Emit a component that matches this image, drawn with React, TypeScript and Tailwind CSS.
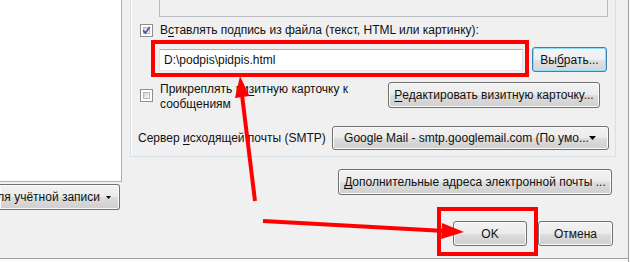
import type { ReactNode } from "react"

const btnBase =
  "flex items-center justify-center whitespace-nowrap rounded-[3px] border border-[#707070] bg-[linear-gradient(to_bottom,#f2f2f2_0%,#ebebeb_50%,#dddddd_51%,#cfcfcf_100%)] shadow-[inset_0_0_0_1px_#fbfbfb]"

const Button = ({ children, className }: { children: ReactNode; className: string }) => (
  <div className={`${btnBase} ${className}`}>{children}</div>
)

const Key = ({ children }: { children: ReactNode }) => (
  <span className="underline decoration-1 underline-offset-[2px]">{children}</span>
)

const Checkbox = ({ checked }: { checked?: boolean }) => (
  <div className="relative h-[13px] w-[13px] shrink-0 border border-[#8e8f8f] bg-white p-[2px]">
    <div className="h-full w-full border border-[#b4b9bf] bg-[linear-gradient(135deg,#d6d6d6,#f7f7f7)]" />
    {checked && (
      <svg className="absolute left-0 top-0" width="11" height="11" viewBox="0 0 11 11">
        <path d="M2.2 5.4 L4.4 8 L8.8 2" fill="none" stroke="#4a5f97" strokeWidth="1.8" />
      </svg>
    )}
  </div>
)

const App = () => {
  return (
    <div className="relative flex h-[262px] w-[630px] overflow-hidden bg-[#f0f0f0] font-['Liberation_Sans',Arial,sans-serif] text-[12px] text-[#111]">
      <div className="flex w-[628px] flex-col">
        <div className="flex h-[258px]">
          {/* left column: account list + actions */}
          <div className="flex w-[122px] shrink-0 flex-col">
            <div className="h-[182px] w-[122px] border-b border-r border-[#abadb3] bg-white" />
            <div
              className={`${btnBase} mt-[2px] h-[26px] w-[120px] justify-end overflow-hidden rounded-l-none border-l-0 pr-[8px]`}
            >
              <span>Действия для учётной записи</span>
              <svg className="ml-[6px] shrink-0" width="5" height="3" viewBox="0 0 5 3">
                <path d="M0 0 H5 L2.5 3 Z" fill="#000" />
              </svg>
            </div>
          </div>

          {/* right column */}
          <div className="ml-[8px] flex w-[486px] flex-col">
            <div className="flex h-[157px] w-[486px] flex-col border border-t-0 border-[#d5dfe5] shadow-[inset_1px_0_0_#fff]">
              <div className="ml-[28px] h-[17px] w-[449px] border border-t-0 border-[#b9bcc2]" />

              <div className="mt-[7px] flex h-[13px] items-center">
                <div className="ml-[9px]">
                  <Checkbox checked />
                </div>
                <span className="ml-[7px] leading-[15px]">
                  В<Key>с</Key>тавлять подпись из файла (текст, HTML или картинку):
                </span>
              </div>

              <div className="mt-[10px] flex h-[25px] items-center">
                <div className="ml-[28px] flex h-[22px] w-[364px] items-center border border-[#abadb3] border-b-[#e3e9ef] border-l-[#e2e3ea] border-r-[#dbdfe6] bg-white pl-[4px]">
                  D:\podpis\pidpis.html
                </div>
                <div className="ml-[9px] flex h-[25px] w-[75px] items-center justify-center whitespace-nowrap rounded-[3px] border border-[#3c7fb1] bg-[linear-gradient(to_bottom,#f4f6f8_0%,#eceef0_50%,#dfe2e4_51%,#d3d6d9_100%)] shadow-[inset_0_0_0_1px_#8fdcf8]">
                  Вы<Key>б</Key>рать...
                </div>
              </div>

              <div className="mt-[10px] flex">
                <div className="ml-[9px] mt-[7px]">
                  <Checkbox />
                </div>
                <div className="ml-[7px] w-[226px] leading-[15px]">
                  Прикреплять ви<Key>з</Key>итную карточку к сообщениям
                </div>
                <Button className="ml-[2px] h-[26px] w-[212px]">
                  <Key>Р</Key>едактировать визитную карточку...
                </Button>
              </div>

              <div className="mt-[14px] flex h-[24px] items-center">
                <span className="ml-[7px] leading-[15px]">
                  Сервер <Key>и</Key>сходящей почты (SMTP)
                </span>
                <div className={`${btnBase} ml-auto mr-[6px] h-[24px] w-[277px] justify-between pl-[5px] pr-[6px]`}>
                  <span>Google Mail - smtp.googlemail.com (По умо...</span>
                  <svg width="7" height="4" viewBox="0 0 7 4">
                    <path d="M0 0 H7 L3.5 4 Z" fill="#000" />
                  </svg>
                </div>
              </div>
            </div>

            <Button className="ml-[208px] mt-[12px] h-[26px] w-[274px]">
              <Key>Д</Key>ополнительные адреса электронной почты ...
            </Button>

            <div className="mt-[26px] flex">
              <Button className="ml-[323px] h-[25px] w-[74px]">OK</Button>
              <Button className="ml-[11px] h-[25px] w-[75px]">Отмена</Button>
            </div>
          </div>
        </div>
        <div className="h-px w-full bg-[#a0a0a0]" />
        <div className="h-[3px] w-full bg-[#fbfbfb]" />
      </div>
      <div className="h-full w-px bg-[#a0a0a0]" />
      <div className="h-full w-px bg-[#fbfbfb]" />

      {/* red annotations drawn over the dialog */}
      <div className="pointer-events-none absolute left-[151px] top-[40px] h-[37px] w-[378px] border-4 border-[#ff0000]" />
      <div className="pointer-events-none absolute left-[437px] top-[207px] h-[49px] w-[101px] border-4 border-[#ff0000]" />
      <svg className="pointer-events-none absolute left-0 top-0" width="630" height="262" viewBox="0 0 630 262">
        <line x1="255" y1="201" x2="242" y2="95" stroke="#ff0000" strokeWidth="4" />
        <polygon points="240,76 249.5,96 235,98" fill="#ff0000" />
        <line x1="263" y1="221" x2="445" y2="231" stroke="#ff0000" strokeWidth="4" />
        <polygon points="464,232 441,239 442,223" fill="#ff0000" />
      </svg>
    </div>
  )
}

export default App
